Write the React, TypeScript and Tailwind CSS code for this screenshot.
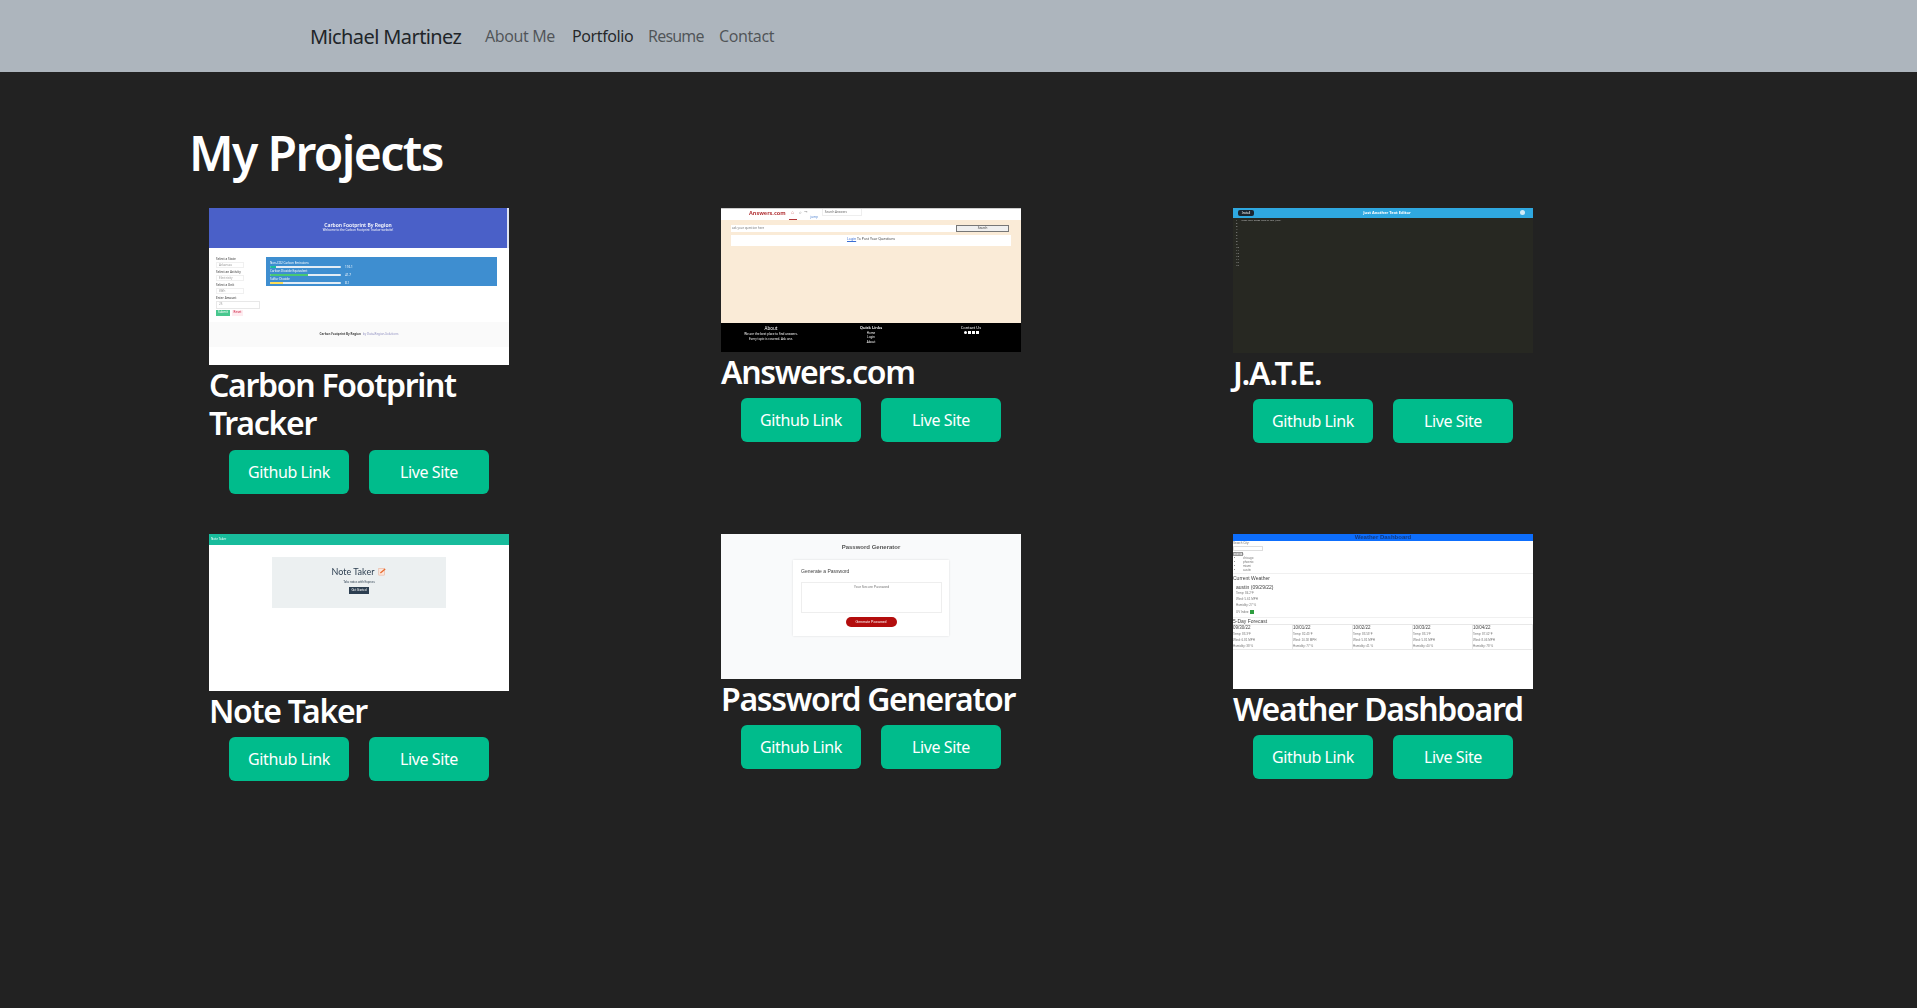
import React from "react";

const sans = "font-['Noto_Sans','Open_Sans',sans-serif]";

function CarbonThumb() {
  const fields = [
    { label: "Select a State", value: "Arkansas" },
    { label: "Select an Activity", value: "Electricity" },
    { label: "Select a Unit", value: "kWh" },
  ];
  const bars = [
    { label: "Non-CO2 Carbon Emissions", pct: "w-[8%]", color: "bg-[#1abc9c]", val: "116.1" },
    { label: "Carbon Dioxide Equivalent", pct: "w-[54%]", color: "bg-[#48c774]", val: "41.7" },
    { label: "Sulfur Dioxide", pct: "w-[18%]", color: "bg-[#ffdd57]", val: "8.1" },
  ];
  return (
    <div className="h-[157px] bg-white flex flex-col">
      <div className="h-10 bg-[#4a60c8] border-r-2 border-[#dfe3f0] flex flex-col items-center justify-center text-white">
        <div className="text-[5px] leading-[6px] font-semibold mt-[-2px]">Carbon Footprint By Region</div>
        <div className="text-[3px] leading-[4px]">Welcome to the Carbon Footprint Tracker website!</div>
      </div>
      <div className="h-[74px] flex pl-[7px] pt-[9px]">
        <div className="w-[50px] text-[3px] leading-[4px] text-[#666]">
          {fields.map((f) => (
            <div key={f.label} className="h-[13px]">
              <div className="font-semibold">{f.label}</div>
              <div className="w-7 h-[6px] mt-[1px] border border-[#f0f0f0] text-[#999] pl-[2px] leading-[4px]">{f.value}</div>
            </div>
          ))}
          <div className="font-semibold">Enter Amount</div>
          <div className="w-11 h-2 mt-[1px] border border-[#e8e8e8] text-[#999] pl-[2px]">25</div>
          <div className="flex gap-[2px] mt-[1px]">
            <div className="w-[14px] h-[6px] bg-[#48c78e] text-white text-center">Submit</div>
            <div className="w-[11px] h-[6px] bg-[#feecf0] text-[#cc0f35] text-center">Reset</div>
          </div>
        </div>
        <div className="w-[231px] h-[29px] bg-[#3e8ed0] pl-1 pt-1">
          {bars.map((b) => (
            <div key={b.label} className="h-2 text-[3px] leading-[4px] text-white">
              <div>{b.label}</div>
              <div className="flex items-center">
                <div className="w-[71px] h-[2px] bg-[#e4edf5] rounded-full overflow-hidden">
                  <div className={`h-full ${b.pct} ${b.color}`} />
                </div>
                <span className="ml-1">{b.val}</span>
              </div>
            </div>
          ))}
        </div>
      </div>
      <div className="h-[25px] bg-[#fafafa] flex items-center justify-center text-[3px] text-[#444]">
        <span className="font-bold">Carbon Footprint By Region</span>
        <span className="ml-[2px] text-[#8f8fc0]">by Data-Region-Solutions</span>
      </div>
    </div>
  );
}

function AnswersThumb() {
  return (
    <div className="h-36 bg-[#faebd7] flex flex-col">
      <div className="h-[12px] bg-white flex items-start border-t border-[#ccc]">
        <span className="ml-7 mt-[1px] text-[5.5px] leading-[7px] font-bold text-[#b3373a]">Answers.com</span>
        <div className="ml-[3px] mt-[1px] flex flex-col items-center">
          <span className="text-[5px] leading-[5px] text-[#c66]">⌂</span>
          <div className="w-2 h-px mt-[4px] bg-[#b3373a]" />
        </div>
        <span className="ml-[2px] text-[5px] leading-[6px] text-[#999]">⌕</span>
        <span className="ml-[2px] text-[4px] leading-[6px] text-[#999]">⇥</span>
        <span className="ml-1 mt-[6px] text-[3px] leading-[4px] text-[#4a7fd0]">jump</span>
        <span className="ml-1 w-10 h-[7px] pl-[2px] border-l border-r border-b border-[#eee] text-[3px] leading-[6px] text-[#666]">Search Answers</span>
      </div>
      <div className="flex-1 px-[10px] pt-[5px]">
        <div className="flex h-[7px]">
          <div className="w-[225px] bg-white text-[3px] leading-[7px] text-[#777] pl-[1px]">ask your question here</div>
          <div className="w-[53px] bg-[#efefef] border border-[#777] text-center text-[3px] leading-[5px] text-[#333]">Search</div>
        </div>
        <div className="w-[280px] h-[11px] mt-[3px] bg-white text-center text-[3.5px] leading-[8px] text-[#444]">
          <span className="text-[#3b6fd4] underline">Login</span> To Post Your Questions
        </div>
      </div>
      <div className="h-[29px] bg-black text-white flex text-[3px] leading-[4px]">
        <div className="w-[100px] text-center pt-[2px]">
          <div className="text-[4.5px] leading-[6px] mb-[1px]">About</div>
          <div className="leading-[5px]">We are the best place to find answers.</div>
          <div className="leading-[5px]">Every topic is covered. Ask one.</div>
        </div>
        <div className="w-[100px] text-center pt-[2px]">
          <div className="text-[4px] leading-[5px] mb-[1px] font-semibold">Quick Links</div>
          <div className="leading-[4.5px]">Home</div>
          <div className="leading-[4.5px]">Login</div>
          <div className="leading-[4.5px]">About</div>
        </div>
        <div className="w-[100px] text-center pt-[2px]">
          <div className="text-[4px] leading-[5px]">Contact Us</div>
          <div className="flex justify-center gap-px mt-px">
            <div className="w-[3px] h-[3px] bg-white rounded-full" />
            <div className="w-[3px] h-[3px] bg-white" />
            <div className="w-[3px] h-[3px] bg-white" />
            <div className="w-[3px] h-[3px] bg-white" />
          </div>
        </div>
      </div>
    </div>
  );
}

function JateThumb() {
  const lines = Array.from({ length: 16 }, (_, i) => i + 1);
  return (
    <div className="h-[145px] bg-[#272822] flex flex-col">
      <div className="h-[10px] bg-[#2fa8e0] flex items-center px-[5px] text-white">
        <div className="w-4 h-[6px] rounded-[2px] bg-[#1b2530] text-[3px] leading-[6px] text-center">Install</div>
        <div className="flex-1 text-center text-[4px] font-bold">Just Another Text Editor</div>
        <div className="w-[5px] h-[5px] rounded-full bg-[#cfeaf7] mr-[3px]" />
      </div>
      <div className="flex text-[2.5px] leading-[3px] text-[#bbb] pt-px pl-[3px]">
        <div className="w-[3px]">
          {lines.map((n) => (
            <div key={n}>{n}</div>
          ))}
        </div>
        <div className="ml-[2px]">/Post your notes here in this JATE!/</div>
      </div>
    </div>
  );
}

function NoteThumb() {
  return (
    <div className="h-[157px] bg-white">
      <div className="h-[11px] bg-[#18bc9c] text-white text-[3px] leading-[10px] pl-[2px]">Note Taker</div>
      <div className="w-[174px] h-[51px] ml-[63px] mt-3 bg-[#ecf0f1] flex flex-col items-center font-['Lato',sans-serif] text-[#2c3e50]">
        <div className="flex items-center mt-[9px] h-3">
          <span className="text-[9px] leading-3">Note Taker</span>
          <svg viewBox="0 0 10 10" className="w-2 h-[9px] ml-1">
            <rect x="1" y="1" width="7" height="8.5" fill="#fbe6dc" stroke="#e9a58a" strokeWidth="0.6" />
            <path d="M3 7 L9 2" stroke="#e8692c" strokeWidth="1.6" />
          </svg>
        </div>
        <div className="text-[3px] leading-[4px] mt-[2px]">Take notes with Express</div>
        <div className="w-5 h-[7px] mt-[3px] bg-[#2c3e50] text-white text-[3px] leading-[7px] text-center">Get Started</div>
      </div>
    </div>
  );
}

function PasswordThumb() {
  return (
    <div className="h-[145px] bg-[#f9fafb] flex flex-col items-center pt-[9px] font-['Liberation_Sans',sans-serif]">
      <div className="text-[6px] leading-[9px] font-bold text-[#555]">Password Generator</div>
      <div className="w-[156px] h-[76px] mt-[8px] bg-white shadow-[0_0_2px_rgba(0,0,0,0.12)] px-2 pt-[8px]">
        <div className="text-[5px] leading-[7px] text-[#444]">Generate a Password</div>
        <div className="w-[141px] h-[31px] mt-[7px] border border-[#eee] text-center text-[3.5px] leading-[9px] text-[#777]">Your Secure Password</div>
        <div className="w-[51px] h-[10px] mt-1 mx-auto rounded-full bg-[#b30d0d] text-white text-center text-[3.5px] leading-[10px]">Generate Password</div>
      </div>
    </div>
  );
}

function WeatherThumb() {
  const days = [
    { date: "09/30/22", temp: "Temp: 83.3°F", wind: "Wind: 6.81 MPH", hum: "Humidity: 38 %" },
    { date: "10/01/22", temp: "Temp: 82.45°F", wind: "Wind: 10.58 MPH", hum: "Humidity: 77 %" },
    { date: "10/02/22", temp: "Temp: 83.53°F", wind: "Wind: 5.81 MPH", hum: "Humidity: 41 %" },
    { date: "10/03/22", temp: "Temp: 83.1°F", wind: "Wind: 5.81 MPH", hum: "Humidity: 40 %" },
    { date: "10/04/22", temp: "Temp: 87.02°F", wind: "Wind: 8.06 MPH", hum: "Humidity: 78 %" },
  ];
  return (
    <div className="h-[155px] bg-white text-[#777] font-['Liberation_Sans',sans-serif] text-[3px] leading-[4px]">
      <div className="h-[7px] bg-[#0d6efd] text-center text-[6px] leading-[7px] font-bold text-[#123a80]">Weather Dashboard</div>
      <div>Search City:</div>
      <div className="w-[30px] h-[5px] border border-[#ddd] mt-[1px]" />
      <div className="w-[10px] h-[4px] border border-[#999] bg-[#eee] mt-[1px] leading-[3px]">Search</div>
      <ul className="pl-[10px] list-disc border-b border-[#f0f0f0] pb-[1px]">
        <li>chicago</li>
        <li>phoenix</li>
        <li>miami</li>
        <li>austin</li>
      </ul>
      <div className="text-[5px] leading-[6px] mt-[1px] text-[#444]">Current Weather</div>
      <div className="pl-[3px] border-b border-[#f0f0f0] pb-px">
        <div className="text-[5px] leading-[6px] mt-[3px] text-[#444]">austin (09/29/22)</div>
        <div className="mt-px h-[6.3px]">Temp: 84.2°F</div>
        <div className="h-[6.3px]">Wind: 5.61 MPH</div>
        <div className="h-[6.3px]">Humidity: 27 %</div>
        <div className="flex items-start h-[6px]">
          UV Index: <span className="ml-px w-[4px] h-[4px] bg-[#2e9e3f]" />
        </div>
      </div>
      <div className="text-[5px] leading-[6px] text-[#444]">5-Day Forecast</div>
      <div className="flex border-y border-[#e8e8e8] h-[26px]">
        {days.map((d) => (
          <div key={d.date} className="w-[61px] border-r border-[#e8e8e8]">
            <div className="text-[4.5px] leading-[6px] text-[#444]">{d.date}</div>
            <div className="h-[6.3px] mt-px">{d.temp}</div>
            <div className="h-[6.3px]">{d.wind}</div>
            <div className="h-[6.3px]">{d.hum}</div>
          </div>
        ))}
      </div>
    </div>
  );
}

const projects = [
  { title: "Carbon Footprint Tracker", thumb: <CarbonThumb /> },
  { title: "Answers.com", thumb: <AnswersThumb /> },
  { title: "J.A.T.E.", thumb: <JateThumb /> },
  { title: "Note Taker", thumb: <NoteThumb /> },
  { title: "Password Generator", thumb: <PasswordThumb /> },
  { title: "Weather Dashboard", thumb: <WeatherThumb /> },
];

function ProjectCard({ title, thumb }: { title: string; thumb: React.ReactNode }) {
  return (
    <div className="px-3">
      <div className="w-[300px] overflow-hidden">
        <div className="blur-[0.25px]">{thumb}</div>
      </div>
      <div className="w-[300px]">
        <h2 className="text-[32px] leading-[38.4px] font-semibold text-white pt-[1px] mb-[7px] tracking-[-1.3px]">{title}</h2>
        <div className="flex gap-5 pl-5 tracking-[-0.4px]">
          <a className="w-[120px] h-11 rounded-md bg-[#00bc8c] text-white flex items-center justify-center">Github Link</a>
          <a className="w-[120px] h-11 rounded-md bg-[#00bc8c] text-white flex items-center justify-center">Live Site</a>
        </div>
      </div>
    </div>
  );
}

export default function App() {
  return (
    <div className={`min-h-[1008px] bg-[#222222] ${sans}`}>
      <nav className="h-[72px] bg-[#adb5bd] flex items-center pl-[310px]">
        <a className="text-[20px] text-[#212529] w-[151px] mr-4 whitespace-nowrap tracking-[-0.6px] pt-px">Michael Martinez</a>
        <div className="flex text-[16px] text-black/55 tracking-[-0.4px]">
          <a className="px-2 w-[87px]">About Me</a>
          <a className="px-2 w-[76px] text-black/80">Portfolio</a>
          <a className="px-2 w-[71px] tracking-[-0.8px]">Resume</a>
          <a className="px-2">Contact</a>
        </div>
      </nav>
      <main>
        <h1 className="text-[48px] leading-[57.6px] font-semibold text-white pl-[189px] pt-[52px] pb-[26.4px] tracking-[-1.6px]">My Projects</h1>
        <div className="grid grid-cols-3 w-[1536px] ml-[197px] gap-y-10 items-start">
          {projects.map((p) => (
            <ProjectCard key={p.title} title={p.title} thumb={p.thumb} />
          ))}
        </div>
      </main>
    </div>
  );
}
